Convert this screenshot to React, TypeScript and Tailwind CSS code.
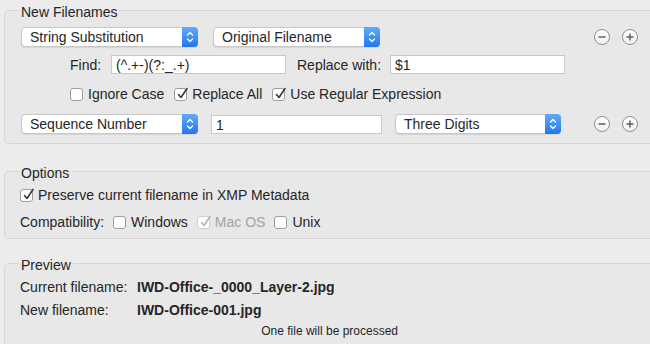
import React from "react";

function Stepper() {
  return (
    <span className="-my-px -mr-px flex w-[16px] items-center justify-center rounded-r-[4px] bg-gradient-to-b from-[#62a9f9] to-[#2277ee]">
      <svg width="8" height="14" viewBox="0 0 8 14" fill="none">
        <path d="M1.5 5 L4 2.5 L6.5 5" stroke="white" strokeWidth="1.3" strokeLinecap="round" strokeLinejoin="round" />
        <path d="M1.5 9 L4 11.5 L6.5 9" stroke="white" strokeWidth="1.3" strokeLinecap="round" strokeLinejoin="round" />
      </svg>
    </span>
  );
}

function Popup({ label, className }: { label: string; className: string }) {
  return (
    <div
      className={`flex h-[20px] items-stretch rounded-[4px] border border-[#c6c6c6] bg-white shadow-[0_1px_1px_rgba(0,0,0,0.08)] ${className}`}
    >
      <span className="flex-1 truncate pl-[8px] leading-[18px]">{label}</span>
      <Stepper />
    </div>
  );
}

function Field({ value, className }: { value: string; className: string }) {
  return (
    <div
      className={`h-[19px] border border-[#c8c8c8] bg-white pl-[4px] leading-[18px] ${className}`}
    >
      {value}
    </div>
  );
}

function Check({
  label,
  checked = false,
  disabled = false,
}: {
  label: string;
  checked?: boolean;
  disabled?: boolean;
}) {
  return (
    <label className="flex items-center gap-[5px]">
      <span
        className={`relative flex h-[13px] w-[13px] items-center justify-center rounded-[3px] border bg-white ${
          disabled ? "border-[#cfcfcf]" : "border-[#9d9d9d]"
        }`}
      >
        {checked && (
          <svg width="13" height="13" viewBox="0 0 13 13" className="absolute -top-[2px] left-[1px]">
            <path
              d="M2.5 7.5 L5 10.5 L11 1.5"
              fill="none"
              stroke={disabled ? "#b5b5b5" : "#3a3a3a"}
              strokeWidth="1.6"
              strokeLinecap="round"
              strokeLinejoin="round"
            />
          </svg>
        )}
      </span>
      <span className={disabled ? "text-[#a3a3a3]" : ""}>{label}</span>
    </label>
  );
}

function RoundButton({ kind }: { kind: "minus" | "plus" }) {
  return (
    <span className="flex h-[16px] w-[16px] items-center justify-center rounded-full border border-[#8f8f8f] bg-gradient-to-b from-white to-[#f0f0f0]">
      <svg width="10" height="10" viewBox="0 0 10 10">
        <path d="M1.5 5 H8.5" stroke="#555" strokeWidth="1.4" />
        {kind === "plus" && <path d="M5 1.5 V8.5" stroke="#555" strokeWidth="1.4" />}
      </svg>
    </span>
  );
}

function Group({
  title,
  className,
  children,
}: {
  title: string;
  className: string;
  children: React.ReactNode;
}) {
  return (
    <fieldset
      className={`ml-[4px] w-[670px] rounded-[5px] border border-[#d6d6d6] bg-[#e8e8e8] ${className}`}
    >
      <legend className="ml-[14px] px-[2px] pt-[4px] leading-[16px]">{title}</legend>
      {children}
    </fieldset>
  );
}

export default function App() {
  return (
    <div className="h-[344px] w-[650px] overflow-hidden bg-[#ececec] font-['Liberation_Sans',Arial,sans-serif] text-[14px] leading-[20px] text-[#262626]">
      <Group title="New Filenames" className="pb-[9px]">
        <div className="mt-[7px] flex items-center pl-[16px]">
          <Popup label="String Substitution" className="w-[177px]" />
          <Popup label="Original Filename" className="ml-[15px] w-[167px]" />
          <div className="ml-[214px] flex gap-[12px]">
            <RoundButton kind="minus" />
            <RoundButton kind="plus" />
          </div>
        </div>

        <div className="mt-[8px] flex h-[19px] items-center pl-[65px]">
          <span className="w-[41px]">Find:</span>
          <Field value="(^.+-)(?:_.+)" className="w-[175px]" />
          <span className="ml-[11px] w-[93px]">Replace with:</span>
          <Field value="$1" className="w-[175px]" />
        </div>

        <div className="mt-[10px] flex h-[20px] items-center gap-[10px] pl-[65px]">
          <Check label="Ignore Case" />
          <Check label="Replace All" checked />
          <Check label="Use Regular Expression" checked />
        </div>

        <div className="mt-[10px] flex items-center pl-[16px]">
          <Popup label="Sequence Number" className="w-[177px]" />
          <Field value="1" className="ml-[13px] w-[171px]" />
          <Popup label="Three Digits" className="ml-[13px] w-[166px]" />
          <div className="ml-[33px] flex gap-[12px]">
            <RoundButton kind="minus" />
            <RoundButton kind="plus" />
          </div>
        </div>
      </Group>

      <Group title="Options" className="mt-[17px] pb-[6px]">
        <div className="mt-[4px] flex h-[20px] items-center pl-[15px]">
          <Check label="Preserve current filename in XMP Metadata" checked />
        </div>
        <div className="mt-[7px] flex h-[20px] items-center gap-[9px] pl-[15px]">
          <span>Compatibility:</span>
          <Check label="Windows" />
          <Check label="Mac OS" checked disabled />
          <Check label="Unix" />
        </div>
      </Group>

      <Group title="Preview" className="mt-[14px] pb-[20px]">
        <div className="mt-[4px] flex h-[20px] items-center pl-[15px]">
          <span className="w-[117px]">Current filename:</span>
          <span className="font-bold">IWD-Office-_0000_Layer-2.jpg</span>
        </div>
        <div className="mt-[3px] flex h-[20px] items-center pl-[15px]">
          <span className="w-[117px]">New filename:</span>
          <span className="font-bold">IWD-Office-001.jpg</span>
        </div>
        <div className="mt-[3px] w-[393px] text-right text-[12px] leading-[16px]">
          One file will be processed
        </div>
      </Group>
    </div>
  );
}
